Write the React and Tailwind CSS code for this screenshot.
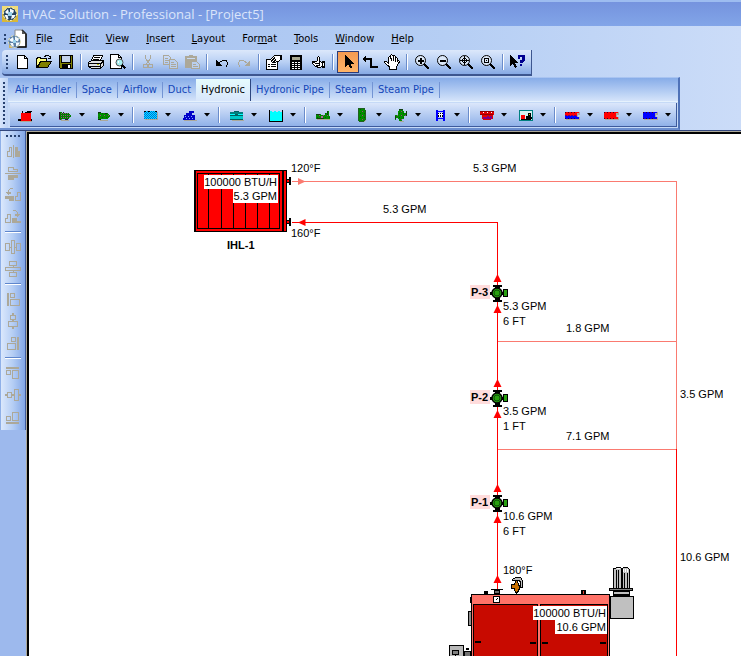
import React from "react";

const K = "#000000";
const TAN = "#aca899";

function Ico({ w = 16, h = 16, children }) {
  return (
    <svg width={w} height={h} viewBox={`0 0 ${w} ${h}`} shapeRendering="crispEdges" fill="none" aria-hidden="true" className="shrink-0">
      {children}
    </svg>
  );
}

function Patterns() {
  return (
    <svg width="0" height="0" className="absolute" aria-hidden="true">
      <defs>
        <pattern id="mesh-cyan" width="2" height="2" patternUnits="userSpaceOnUse">
          <rect width="2" height="2" fill="#00f0ff" />
          <rect width="1" height="1" fill="#0060e0" />
          <rect x="1" y="1" width="1" height="1" fill="#0060e0" />
        </pattern>
        <pattern id="mesh-green" width="2" height="2" patternUnits="userSpaceOnUse">
          <rect width="2" height="2" fill="#008000" />
          <rect width="1" height="1" fill="#905080" />
        </pattern>
        <pattern id="mesh-leaf" width="4" height="4" patternUnits="userSpaceOnUse">
          <rect width="4" height="4" fill="#008c00" />
          <rect width="1" height="1" fill="#a04080" />
          <rect x="2" y="2" width="1" height="1" fill="#006000" />
        </pattern>
      </defs>
    </svg>
  );
}

const GlobeIcon = () => (
  <svg width="16" height="16" viewBox="0 0 16 16" aria-hidden="true">
    <rect width="16" height="16" fill="#f0dc78" />
    <path d="M0 8L0 16H16V9z" fill="#d8b838" />
    <circle cx="8" cy="8" r="6.5" fill="#23435f" />
    <path d="M3 6l3-3 1 4-2 1zM8 2.500l4 2-1 3-3-1zM2.500 9l3 0 1 4-2 0zM10 9l3.500 0-1.500 3-3 1z" fill="#f4fbff" />
    <path d="M6 6h4v4H6z" fill="#9cd4ee" />
    <circle cx="8" cy="8" r="6.5" fill="none" stroke="#fff8c8" strokeDasharray="2 2" />
  </svg>
);

const DocIcon = () => (
  <svg width="20" height="20" viewBox="0 0 20 20" aria-hidden="true">
    <path d="M7 1h7l4 4v13H7z" fill="#fff" stroke="#8a8a8a" />
    <path d="M14 1l4 4v13H9" fill="none" stroke="#000" strokeWidth="1.5" />
    <path d="M14 1v4h4z" fill="#555" />
    <circle cx="6.500" cy="12.500" r="6" fill="#5a7fa4" />
    <path d="M1 11l4-3 1 4-2 1zM7 7.500l4 2-1 3-3-1zM2 14h3l1 3.500H4zM8 13.500h4l-2 3-2 1z" fill="#f4fbff" />
    <path d="M5 11h3v3H5z" fill="#9cd4ee" />
    <path d="M1 15l4 4H1z" fill="#c9b060" />
    <circle cx="6.500" cy="12.500" r="6" fill="none" stroke="#efe6b0" strokeDasharray="2 2" />
  </svg>
);

const icons = {
  New: (
    <Ico>
      <path d="M3.500 1.500H10.500L13.500 4.500V14.500H3.500z" fill="#fff" stroke={K} />
      <path d="M10.500 1.500V4.500H13.500" stroke={K} />
    </Ico>
  ),
  Open: (
    <Ico>
      <path d="M0.500 13.500V4.500H1.500V3.500H4.500V4.500H10.500V7.500H4.500z" fill="#ffff80" stroke={K} />
      <path d="M1.500 13.500L4.500 7.500H15.500L11.500 13.500z" fill="#808000" stroke={K} />
      <path d="M8.500 2.500L10.500 1.500H12.500L14.500 3.500M12 4.500H15M14.500 1.500V4.500" stroke={K} />
    </Ico>
  ),
  Save: (
    <Ico>
      <path d="M1.500 1.500H14.500V14.500H2.500L1.500 13.500z" fill="#808000" stroke={K} />
      <rect x="4" y="1" width="8" height="7" fill="#c3d2ea" stroke="none" />
      <path d="M3.500 1V8.500H12.500V1M1 1.500H15" stroke={K} />
      <rect x="4" y="10" width="9" height="4" fill={K} />
      <rect x="10" y="11" width="2" height="3" fill="#fff" />
    </Ico>
  ),
  Print: (
    <Ico>
      <path d="M5.500 1.500H14.500L12.500 6.500H3.500z" fill="#fff" stroke={K} />
      <path d="M6 3.500H12M5 5.500H11" stroke={K} />
      <path d="M0.500 8.500L3.500 6.500H15.500V11.500L12.500 14.500H3.500L0.500 12.500z" fill="#e0e0e0" stroke={K} />
      <path d="M0 9.500H12M1 12.500H12M12.500 9V14M13 9.500L15 7.500" stroke={K} />
      <rect x="9" y="10" width="2" height="1" fill="#c0c000" />
    </Ico>
  ),
  Preview: (
    <Ico>
      <path d="M0.500 0.500H8.500L11.500 3.500V14.500H0.500z" fill="#fff" stroke={K} />
      <path d="M8.500 0.500V3.500H11.500" stroke={K} />
      <circle cx="9.500" cy="8.500" r="3.500" fill="#a8f0f0" stroke="#505050" shapeRendering="auto" />
      <path d="M8 7h1M8 9v-2" stroke="#fff" />
      <path d="M12 11L15.500 14.500" stroke={K} strokeWidth="2" />
    </Ico>
  ),
  Cut: (
    <Ico>
      <path d="M5.500 1V4L8 8L10.500 4V1M8 8L6 10M8 8L10 10" stroke={TAN} />
      <circle cx="5.500" cy="12" r="2" stroke={TAN} />
      <circle cx="10.500" cy="12" r="2" stroke={TAN} />
    </Ico>
  ),
  Copy: (
    <Ico>
      <path d="M1.500 1.500H6.500L8.500 3.500V10.500H1.500z" stroke={TAN} />
      <path d="M3 4.500H6M3 6.500H7M3 8.500H6" stroke={TAN} />
      <path d="M7.500 5.500H12.500L15.500 8.500V14.500H7.500z" fill="#b9cfef" stroke={TAN} />
      <path d="M9 8.500H12M9 10.500H14M9 12.500H14" stroke={TAN} />
    </Ico>
  ),
  Paste: (
    <Ico>
      <path d="M1 2h12v12H1z" fill={TAN} />
      <path d="M5 1h4v2H5z" fill={TAN} />
      <path d="M3 4.500H11" stroke="#c9daf2" />
      <path d="M7.500 7.500H12.500L15.500 10.500V14.500H7.500z" fill="#b9cfef" stroke={TAN} />
      <path d="M9 10.500H12M9 12.500H14" stroke={TAN} />
    </Ico>
  ),
  Undo: (
    <Ico>
      <path d="M2 6V12H8z" fill={K} />
      <path d="M5 9L7 7.500L9 6.500H12L13.500 8.500V10.500L12 12.500" stroke={K} />
    </Ico>
  ),
  Redo: (
    <Ico>
      <path d="M14 6V12H8z" fill={TAN} />
      <path d="M11 9L9 7.500L7 6.500H4L2.500 8.500V10.500L4 12.500" stroke={TAN} />
    </Ico>
  ),
  Properties: (
    <Ico>
      <path d="M0.500 5.500H11.500V15.500H0.500z" fill="#fff" stroke={K} />
      <path d="M2 10.500H4M5 10.500H10M2 12.500H4M5 12.500H10" stroke={K} />
      <path d="M3.500 6.500L8.500 1.500H12L15.500 1.500V5L12 7.500L8 8.500L6 8.500" fill="#fff" stroke={K} />
      <path d="M5 7.500L9 3.500M7 8.500L10 5.500" stroke={K} />
      <rect x="14" y="2" width="2" height="4" fill={K} />
    </Ico>
  ),
  Calculator: (
    <Ico>
      <rect x="2" y="1" width="12" height="15" fill={K} />
      <rect x="4" y="3" width="8" height="3" fill="#a8a890" />
      <path d="M4 8.500H12M4 10.500H12M4 12.500H12M4 14.500H12" stroke="#fff" strokeDasharray="2 1" />
    </Ico>
  ),
  Check: (
    <Ico>
      <path d="M7.500 6.500V3.500L8.500 2.500L9.500 3.500V7.500L12.500 8.500V12.500L9.500 13.500L5.500 12.500L2.500 9.500V7.500L4.500 8.500z" fill="#fff" stroke={K} />
      <path d="M4 7.500H7M5 9.500H9M6 11.500H9M9.500 8V12" stroke={K} />
      <rect x="12" y="7" width="3" height="7" fill={K} />
      <rect x="13" y="9" width="1" height="3" fill="#fff" />
    </Ico>
  ),
  Select: (
    <Ico>
      <path d="M5 1V13L8 10L10 14.500L12 13.500L10 9.500H13.500z" fill={K} />
    </Ico>
  ),
  Connect: (
    <Ico>
      <path d="M0 5L4 1V4H10V12H16V14H8V6H4V9z" fill={K} />
    </Ico>
  ),
  Pan: (
    <Ico>
      <path d="M5.500 15.500V13L0.500 8.500V7.500H2.500L4.500 9V3.500L5.500 2.500L6.500 4V1.500L7.500 0.500L9 1.500V2.500L10.500 1.500L11.500 2.500V4L12.500 3.500L13.500 4.500V7L14.500 6.500L15.500 7.500L12.500 13V15.500z" fill="#fff" stroke={K} />
      <path d="M7.500 4V7M9.500 3V7M11.500 4V8" stroke={K} />
    </Ico>
  ),
  ...Object.fromEntries(
    ["Zoom in", "Zoom out", "Zoom all", "Zoom page"].map((name, i) => [
      name,
      <Ico key={name}>
        <circle cx="6.500" cy="6.500" r="5" fill="#dce8f8" stroke={K} shapeRendering="auto" />
        {i === 0 && <path d="M4 6h2V4h2v2h2v2H8v2H6V8H4z" fill={K} />}
        {i === 1 && <path d="M4 6h6v2H4z" fill={K} />}
        {i === 2 && <path d="M2 6.500H11M6.500 2V11M4.500 5V8M8.500 5V8M5 4.500H8M5 8.500H8" stroke={K} />}
        {i === 3 && <path d="M4.500 4.500H8.500V8.500H4.500zM6 6.500H7" stroke={K} />}
        <path d="M10 10L15 15" stroke={K} strokeWidth="2" />
      </Ico>,
    ])
  ),
  Help: (
    <Ico>
      <path d="M0 1V12L3 9.500L5 14L7 13L5 9H8z" fill={K} />
      <path d="M8 1h6l1 1v4l-3 3h-2V6h2V3h-2v2H8z" fill="#000090" />
      <path d="M10 10h2v2h-2z" fill="#000090" />
    </Ico>
  ),
};

const mainBar = [
  "New", "Open", "Save", "|", "Print", "Preview", "|", "Cut", "Copy", "Paste", "|", "Undo", "Redo", "|",
  "Properties", "Calculator", "Check", "|", "Select", "Connect", "Pan", "|",
  "Zoom in", "Zoom out", "Zoom all", "Zoom page", "|", "Help",
];

const menus = [
  ["", "F", "ile"], ["", "E", "dit"], ["", "V", "iew"], ["", "I", "nsert"], ["", "L", "ayout"],
  ["For", "m", "at"], ["", "T", "ools"], ["", "W", "indow"], ["", "H", "elp"],
];

const tabs = ["Air Handler", "Space", "Airflow", "Duct", "Hydronic", "Hydronic Pipe", "Steam", "Steam Pipe"];

const equipment = {
  Pump: (
    <Ico>
      <path d="M0 12h3v2H0zM13 12h1v2h-1z" fill={K} />
      <path d="M4 4h1v2H4zM9 4h5v1H9zM7 5h6v1H7z" fill={K} />
      <rect x="3" y="6" width="10" height="8" fill="#ff0000" />
      <path d="M14 14.500H2" stroke={TAN} />
    </Ico>
  ),
  "Inline pump": (
    <Ico>
      <path d="M2 5h3v1h6l3 2v2l-3 2H5v1H2z" fill="url(#mesh-green)" />
      <path d="M2 5v7M6 5h1M8 12h3" stroke="#301040" />
      <path d="M4 13.500H12" stroke={TAN} />
    </Ico>
  ),
  "Circulator": (
    <Ico>
      <path d="M2 5h3v1h6l3 2v2l-3 2H5v1H2z" fill="url(#mesh-leaf)" />
      <path d="M2 5h3M9 6h2M2 12h3" stroke="#103010" />
      <path d="M4 13.500H12" stroke={TAN} />
    </Ico>
  ),
  Chiller: (
    <Ico>
      <rect x="2" y="5" width="13" height="8" fill={TAN} />
      <rect x="1" y="4" width="13" height="8" fill="url(#mesh-cyan)" />
      <path d="M1 4.500H3M5 4.500H7M12 4.500H14" stroke={K} />
    </Ico>
  ),
  Compressor: (
    <Ico>
      <path d="M2 8h2V6h3V4h5v2h-2v2h3v5H1v-2h1z" fill="#0000c8" />
      <path d="M3 9.500H12M4 11.500H13" stroke="#80a0ff" strokeDasharray="1 2" />
      <path d="M2 13.500H15" stroke={TAN} />
    </Ico>
  ),
  "Heat exchanger": (
    <Ico>
      <rect x="1" y="5" width="13" height="2" fill="#008080" />
      <rect x="1" y="7" width="13" height="2" fill="#00ffff" />
      <rect x="1" y="8" width="13" height="1" fill="#006060" />
      <rect x="1" y="9" width="13" height="3" fill="#00c8c8" />
      <path d="M5 4.500H10M1 12.500H14M6 7.500H9" stroke="#006060" />
      <path d="M3 13.500H15" stroke={TAN} />
    </Ico>
  ),
  Tank: (
    <Ico>
      <path d="M1 4V14H15V4L13 5L11 4L9 5L7 4L5 5L3 4z" fill="#00ffff" />
      <path d="M1.500 3V14M14.500 3V14M1 14.500H15" stroke={K} />
    </Ico>
  ),
  "Pump skid": (
    <Ico>
      <path d="M1 7h5v1h4V6h2V4h2v5h1v3H1z" fill="url(#mesh-leaf)" />
      <path d="M1 7.500H5M2 11.500H9M12.500 4V8" stroke="#104010" />
      <path d="M6 9h2v2H6z" fill="#b060a0" />
      <path d="M2 12.500H15" stroke={TAN} />
    </Ico>
  ),
  "Expansion tank": (
    <Ico>
      <path d="M6 2h4l2 2v9l-2 2H6l-2-2V4z" fill={TAN} />
      <path d="M5 1h5l1 2v10l-1 1H5l-1-1V3z" fill="url(#mesh-leaf)" stroke="#206020" />
    </Ico>
  ),
  Separator: (
    <Ico>
      <path d="M6 2h4v2h1v2h2V4h1v5h-3v3h-2v2H6v-2H5v-1H3v2H2V8h3V4h1z" fill="url(#mesh-leaf)" />
      <path d="M6 2.500H10M13.500 4V9M2.500 9V12" stroke="#104010" />
      <path d="M7 14.500H11" stroke={TAN} />
    </Ico>
  ),
  Strainer: (
    <Ico>
      <path d="M4 3h2v11H4zM11 3h2v11h-2z" fill="#0000ff" />
      <path d="M6 4.500H11M6 11.500H11" stroke="#0000ff" />
      <rect x="6" y="6" width="5" height="4" fill="#fff" />
      <path d="M6 6.500H11M6 8.500H11M6 9.500H11" stroke={K} strokeDasharray="1 1" />
    </Ico>
  ),
  "Cooling tower": (
    <Ico>
      <path d="M1 4h14v4h-1v4h-2v1H4v-1H3V8H1z" fill="#e00000" />
      <path d="M1 4.500H15M1 7.500H14" stroke="#900000" />
      <path d="M4 5.500H13" stroke="#fff" strokeDasharray="1 3" />
      <path d="M4 9h9v3H4z" fill="#800080" />
      <path d="M4 9.500H8M10 9.500H11" stroke="#f00000" />
    </Ico>
  ),
  Schematic: (
    <Ico>
      <rect x="1.500" y="3.500" width="13" height="10" fill="#d8f0f0" stroke="#008080" />
      <path d="M3 8h4v4H3z" fill="#ff0000" />
      <path d="M8 9h2V6h3v4h1v2H8z" fill={K} />
      <path d="M3 12.500H13" stroke={K} />
      <rect x="11" y="7" width="1" height="1" fill="#d0d000" />
    </Ico>
  ),
  ...Object.fromEntries(
    [["Heating cooling coil", "#ff0000", "#0000ff"], ["Heating coil", "#ff0000", "#ff0000"], ["Cooling coil", "#0000ff", "#0000ff"]].map(([n, a, b]) => [
      n,
      <Ico key={n}>
        <path d="M1 5h14v3h-2v2h2v3H1z" fill={TAN} />
        <path d="M0 5h14v1h-2v3H0z" fill={a} />
        <path d="M0 9h12v1h2v2H0z" fill={b} />
        <path d="M0 5.500H12M0 11.500H12" stroke="#400020" strokeDasharray="1 2" />
        {a !== b && <path d="M0 8.500H12" stroke="#600080" strokeDasharray="2 1" />}
      </Ico>,
    ])
  ),
};

const equipmentBar = [
  "Pump", "Inline pump", "Circulator", "|", "Chiller", "Compressor", "|", "Heat exchanger", "Tank", "|",
  "Pump skid", "Expansion tank", "Separator", "Strainer", "|", "Cooling tower", "Schematic", "|",
  "Heating cooling coil", "Heating coil", "Cooling coil",
];

const arrange = [
  ["Flip horizontal", <><path d="M2.500 13.500V8.500H4.500V4.500H6.500V13.500z" stroke={TAN} /><path d="M8.500 2V15" stroke={TAN} /><path d="M10 14V4h3v4h2v6z" fill={TAN} /></>],
  ["Flip vertical", <><path d="M3.500 6.500V2.500H8.500V4.500H12.500V6.500z" stroke={TAN} /><path d="M0 8.500H16" stroke={TAN} /><path d="M3 10h10v3H9v2H3z" fill={TAN} /></>],
  ["Rotate left", <><path d="M8 1.500H5.500L3.500 3.500V8M1 5.500h5M2 6.500h4" stroke={TAN} /><path d="M0 9h9v5H4v-2H0z" fill={TAN} /><path d="M10.500 13.500V9.500H12.500V5.500H15.500V13.500z" stroke={TAN} /></>],
  ["Rotate right", <><path d="M8 1.500H10.500L12.500 3.500V8M10 5.500h5M10 6.500h4" stroke={TAN} /><path d="M7 9h5v3h4v2H7z" fill={TAN} /><path d="M0.500 13.500V9.500H2.500V5.500H5.500V13.500z" stroke={TAN} /></>],
  null,
  ["Center horizontally", <><path d="M0.500 4.500H4.500V11.500H0.500zM6.500 1.500H9.500V14.500H6.500zM11.500 4.500H15.500V11.500H11.500zM5 8H7M9 8H12" stroke={TAN} /></>],
  ["Center vertically", <><path d="M4.500 0.500H11.500V4.500H4.500zM0.500 6.500H15.500V9.500H0.500zM4.500 11.500H11.500V15.500H4.500zM8 5V7M8 9V12" stroke={TAN} /></>],
  null,
  ["Align left", <><path d="M2 2h2v13H2z" fill={TAN} /><path d="M5.500 2.500H9.500V6.500H5.500zM5.500 8.500H14.500V14.500H5.500z" stroke={TAN} /></>],
  ["Align centers", <><path d="M8 0V3M8 7V9M8 13V16" stroke={TAN} strokeWidth="2" /><path d="M5.500 2.500H10.500V6.500H5.500zM3.500 8.500H12.500V13.500H3.500z" stroke={TAN} /></>],
  ["Align right", <><path d="M12 2h2v13h-2z" fill={TAN} /><path d="M6.500 2.500H10.500V6.500H6.500zM2.500 8.500H10.500V14.500H2.500z" stroke={TAN} /></>],
  null,
  ["Align tops", <><path d="M1 2h13v2H1z" fill={TAN} /><path d="M1.500 5.500H5.500V9.500H1.500zM7.500 5.500H13.500V13.500H7.500z" stroke={TAN} /></>],
  ["Align middles", <><path d="M0 8H3M6 8H9M13 8H16" stroke={TAN} strokeWidth="2" /><path d="M2.500 5.500H6.500V10.500H2.500zM9.500 2.500H13.500V13.500H9.500z" stroke={TAN} /></>],
  ["Align bottoms", <><path d="M1 13h13v2H1z" fill={TAN} /><path d="M1.500 7.500H5.500V11.500H1.500zM7.500 3.500H13.500V11.500H7.500z" stroke={TAN} /></>],
];

const VSep = () => (
  <div className="flex w-2 shrink-0 justify-center" aria-hidden="true">
    <span className="h-4 w-px bg-[#6a8ccb]" />
    <span className="h-4 w-px bg-white" />
  </div>
);

const Grip = ({ count }) => (
  <div className="flex flex-col gap-0.5" aria-hidden="true">
    {Array.from({ length: count }, (_, i) => (
      <span key={i} className="h-0.5 w-0.5 bg-[#27416f]" />
    ))}
  </div>
);

function Up({ x = 497.5, y, c = "#ff0000" }) {
  return <path d={`M${x} ${y}l4 8h-8z`} fill={c} />;
}

function PumpNode({ y, name, flow, head }) {
  return (
    <g>
      <rect x="470" y={y - 8} width="20" height="14" fill="#ffdcdc" />
      <text x="471" y={y + 3} className="font-bold">{name}</text>
      <g shapeRendering="crispEdges">
        <path d={`M493 ${y - 7.5}h9M495 ${y - 6}h5M493 ${y + 7.5}h9M495 ${y + 6}h5`} stroke={K} strokeWidth="2" />
        <rect x="503.500" y={y - 3.5} width="4" height="7" fill="#28a010" stroke={K} />
      </g>
      <circle cx="497" cy={y} r="5" fill="#28a010" stroke={K} strokeWidth="1.5" />
      <circle cx="497" cy={y} r="3" fill="#28a010" stroke="#0c5008" />
      <path d={`M491 ${y - 1}v3M503 ${y - 1}v3`} stroke={K} strokeWidth="2" />
      <Up y={y - 19} />
      <Up y={y + 12} />
      <text x="503" y={y + 17}>{flow}</text>
      <text x="503" y={y + 32}>{head}</text>
    </g>
  );
}

function Radiator() {
  return (
    <g>
      <g shapeRendering="crispEdges">
        <rect x="194.500" y="170.500" width="92" height="61" fill="#ff0000" stroke={K} />
        <path d="M194 231.500H287M195 171v61" stroke={K} />
        <rect x="197.500" y="173.500" width="82" height="55" stroke={K} fill="none" />
        <path d="M208.500 173V228M221.500 173V228M233.500 173V228M245.500 173V228M257.500 173V228M269.500 173V228" stroke={K} />
        <path d="M283 170V232" stroke={K} strokeWidth="2" />
        <rect x="286.500" y="179.500" width="3" height="3" fill="#ff0000" stroke={K} />
        <rect x="286.500" y="220.500" width="3" height="3" fill="#ff0000" stroke={K} />
        <rect x="289" y="177" width="2" height="8" fill={K} />
        <rect x="289" y="218" width="2" height="8" fill={K} />
        <rect x="204" y="175" width="74" height="14" fill="#fff" />
        <rect x="233" y="189" width="45" height="14" fill="#fff" />
      </g>
      <text x="277" y="186" textAnchor="end">100000 BTU/H</text>
      <text x="277" y="200" textAnchor="end">5.3 GPM</text>
      <text x="227" y="249" className="font-bold">IHL-1</text>
      <text x="291" y="172">120°F</text>
      <text x="291" y="237">160°F</text>
    </g>
  );
}

function Boiler() {
  return (
    <g>
      <g shapeRendering="crispEdges" stroke={K} fill="none">
        <rect x="471.500" y="594.500" width="138" height="90" fill="#ff7268" />
        <rect x="473.500" y="604.500" width="64" height="80" fill="#c80a00" />
        <rect x="540.500" y="604.500" width="67" height="80" fill="#c80a00" />
        <rect x="468.500" y="611.500" width="3" height="14" fill="#909090" />
        <rect x="470.500" y="597.500" width="1" height="5" fill={K} />
        <path d="M475 642H481M530 643H536M542 643H548M600 643H606" strokeWidth="2" />
        <rect x="484.500" y="591.500" width="3" height="2" fill={K} />
        <rect x="581.500" y="590.500" width="4" height="3" fill={K} />
        <rect x="583" y="591" width="1" height="3" fill="#e04030" stroke="none" />
        <path d="M491 589.500H503" />
        <rect x="494.500" y="590.500" width="5" height="3" fill="#707070" />
        <rect x="493.500" y="596.500" width="6" height="6" fill="#fff" />
        <path d="M496 600L498 598" />
        <rect x="610.500" y="596.500" width="23" height="22" fill="#c0c0c0" />
        <path d="M613.500 588V568.500H615.500L616.500 567.500H620.500L622 569L623.500 567.500H627.500L629.500 569.500V588z" fill="#c0c0c0" />
        <path d="M616.500 570V588M618.500 570V588M624.500 573V588M627.500 573V588" />
        <path d="M621.500 569V588" strokeWidth="2" />
        <path d="M617 568.500H620M623.500 569V572M625.500 569V572M627.500 569V572" stroke="#fff" />
        <rect x="609.500" y="588.500" width="23" height="2" fill="#808080" />
        <rect x="613.500" y="591.500" width="16" height="3" fill="#c0c0c0" />
        <path d="M613 595.500H630" />
        <path d="M512.500 579.500L515.500 577.500H520.500L522.500 580.500V587.500H520.500V582.500L519.500 580.500H512.500z" fill="#c0c0c0" />
        <path d="M514.500 583.500L516.500 580.500L518.500 583.500V585.500H519.500V588.500L517.500 592.500H515.500L514.500 589.500V588.500H511.500V584.500H514.500z" fill="#c87000" />
        <path d="M516.500 592V595" />
        <rect x="449.500" y="645.500" width="14" height="20" fill="#b8b8b8" />
        <rect x="452.500" y="650.500" width="6" height="4" fill="#808080" />
        <path d="M455.500 654V656" />
        <rect x="464.500" y="651.500" width="6" height="10" fill="#707070" />
        <rect x="466" y="648" width="3" height="2" fill={K} stroke="none" />
        <rect x="533" y="606" width="74" height="14" fill="#fff" stroke="none" />
        <rect x="555" y="620" width="52" height="14" fill="#fff" stroke="none" />
      </g>
      <text x="606" y="617" textAnchor="end">100000 BTU/H</text>
      <text x="606" y="631" textAnchor="end">10.6 GPM</text>
    </g>
  );
}

function Diagram() {
  return (
    <svg className="absolute inset-0 h-full w-full font-['Liberation_Sans',Arial,sans-serif] text-[11px]" role="img" aria-label="Hydronic system diagram">
      <g transform="translate(-29 -134)" fill={K}>
        <g shapeRendering="crispEdges" fill="none">
          <path d="M292 181.500H676.500V449" stroke="#fa7a70" />
          <path d="M497 341.500H676M497 449.500H676" stroke="#fa7a70" />
          <path d="M676.500 449V800" stroke="#ff0000" />
          <path d="M292 222.500H497.500V590" stroke="#ff0000" />
        </g>
        <path d="M298 178l7.500 3.500l-7.500 3.500z" fill="#fa7a70" />
        <path d="M305.500 219l-7.500 3.500l7.500 3.500z" fill="#ff0000" />
        <Radiator />
        <PumpNode y={293} name="P-3" flow="5.3 GPM" head="6 FT" />
        <PumpNode y={398} name="P-2" flow="3.5 GPM" head="1 FT" />
        <PumpNode y={503} name="P-1" flow="10.6 GPM" head="6 FT" />
        <Up y={575} />
        <Boiler />
        <text x="473" y="172">5.3 GPM</text>
        <text x="383" y="213">5.3 GPM</text>
        <text x="566" y="332">1.8 GPM</text>
        <text x="566" y="440">7.1 GPM</text>
        <text x="680" y="398">3.5 GPM</text>
        <text x="680" y="561">10.6 GPM</text>
        <text x="503" y="574">180°F</text>
      </g>
    </svg>
  );
}

export default function App() {
  return (
    <div className="flex h-screen flex-col overflow-hidden bg-[#9db9ed] font-['DejaVu_Sans_Condensed','DejaVu_Sans',Tahoma,sans-serif] text-[11px] leading-4 text-black">
      <Patterns />
      <header className="flex h-[26px] shrink-0 items-center gap-1 border-t-2 border-[#9dbcf0] bg-linear-to-b from-[#7593de] to-[#82a5e8] pl-0.5">
        <GlobeIcon />
        <h1 className="font-['Open_Sans','Noto_Sans',sans-serif] text-[13px] font-medium text-[#dbe5fa]">HVAC Solution - Professional - [Project5]</h1>
      </header>

      <div className="shrink-0 bg-linear-to-r from-[#a4c0f0] via-[#b5cef4] via-60% to-[#cbdcf8]">
        <nav className="flex h-6 items-center pt-0.5 pl-1">
          <Grip count={3} />
          <span className="ml-0.5 flex w-5"><DocIcon /></span>
          <div className="ml-2 flex gap-[17px]">
            {menus.map(([a, u, b]) => (
              <button key={a + u + b} type="button"><span>{a}<u>{u}</u>{b}</span></button>
            ))}
          </div>
        </nav>

        <div role="toolbar" aria-label="Standard" className="ml-0.5 flex h-[26px] w-fit items-center rounded-l border-r border-b-2 border-[#3d568f] bg-linear-to-b from-[#dce8fb] via-[#b9d0f4] to-[#86a9e4] pr-0.5 pl-1">
          <Grip count={4} />
          <div className="ml-[3px] flex items-center">
            {mainBar.map((name, i) =>
              name === "|" ? (
                <VSep key={i} />
              ) : (
                <button
                  key={name}
                  type="button"
                  aria-label={name}
                  className={`flex h-[22px] w-[22px] items-center justify-center ${name === "Select" ? "border border-[#2c3c78] bg-linear-to-b from-[#f49a50] to-[#ffb468]" : ""}`}
                >
                  {icons[name]}
                </button>
              )
            )}
          </div>
        </div>

        <section className="mt-px flex w-fit items-stretch border-t border-r-2 border-b-2 border-t-[#a9c4f1] border-r-[#4f72b8] border-b-[#6c8fd0] bg-[#a5c1ef]">
          <div className="flex w-2 items-center bg-linear-to-r from-[#d8e6fb] to-[#bdd3f5] pl-[3px]">
            <Grip count={11} />
          </div>
          <div>
            <div role="tablist" className="flex h-6 items-stretch border-b border-[#e6f2fd] bg-linear-to-b from-[#87ace8] to-[#d5e4fa] pt-px pl-0.5">
              {tabs.map((t) => (
                <button
                  key={t}
                  type="button"
                  role="tab"
                  aria-selected={t === "Hydronic"}
                  className={
                    t === "Hydronic"
                      ? "border-r border-[#2d467f] bg-linear-to-b from-[#e6fbfd] to-[#d8e6fb] px-[5px]"
                      : "flex items-center text-[#1446b8]"
                  }
                >
                  {t === "Hydronic" ? t : <span className={`px-[5px] ${t === "Duct" ? "" : "border-r border-[#7394d4]"}`}>{t}</span>}
                </button>
              ))}
            </div>
            <div className="bg-[#c6daf7] pt-px pr-px pb-px pl-[2px]">
              <div role="toolbar" aria-label="Hydronic equipment" className="flex h-6 items-center border-r border-b border-[#3d5a9c] bg-linear-to-b from-[#dce7fb] to-[#90b1e8] pl-0.5">
                {equipmentBar.map((name, i) =>
                  name === "|" ? (
                    <VSep key={i} />
                  ) : (
                    <div key={name} className="flex items-center pr-0.5 pl-[3px]">
                      <button type="button" aria-label={name} className="flex h-5 w-[22px] items-center justify-center">{equipment[name]}</button>
                      <button type="button" aria-label={`${name} options`} className="flex h-5 w-3 items-center justify-center">
                        <Ico w={6} h={4}><path d="M0 0H6L3 3.500z" fill={K} shapeRendering="auto" /></Ico>
                      </button>
                    </div>
                  )
                )}
              </div>
            </div>
          </div>
        </section>
      </div>

      <div className="flex min-h-0 flex-1 border-t border-[#33477c]">
        <aside className="w-[26px] shrink-0">
          <div role="toolbar" aria-label="Arrange" aria-orientation="vertical" className="flex flex-col items-center border-r border-l border-r-[#3d5a9c] border-l-[#8fb0e8] bg-linear-to-r from-[#dbe8fc] via-[#b4cdf4] to-[#82a6e6] pt-1 pb-0.5">
            <div className="mb-[3px] flex gap-0.5" aria-hidden="true">
              {[0, 1, 2, 3].map((i) => <span key={i} className="h-0.5 w-0.5 bg-[#27416f]" />)}
            </div>
            {arrange.map((item, i) =>
              item ? (
                <button key={i} type="button" aria-label={item[0]} className="flex h-[22px] w-[22px] items-center justify-center">
                  <Ico>{item[1]}</Ico>
                </button>
              ) : (
                <div key={i} className="flex h-2 w-4 flex-col justify-center" aria-hidden="true">
                  <span className="h-px bg-[#5f86cc]" />
                  <span className="h-px bg-white" />
                </div>
              )
            )}
          </div>
        </aside>
        <main className="min-w-0 flex-1 border-t border-l border-[#aca899] bg-white">
          <div className="relative h-full border-t-2 border-l-2 border-black">
            <Diagram />
          </div>
        </main>
      </div>
    </div>
  );
}
